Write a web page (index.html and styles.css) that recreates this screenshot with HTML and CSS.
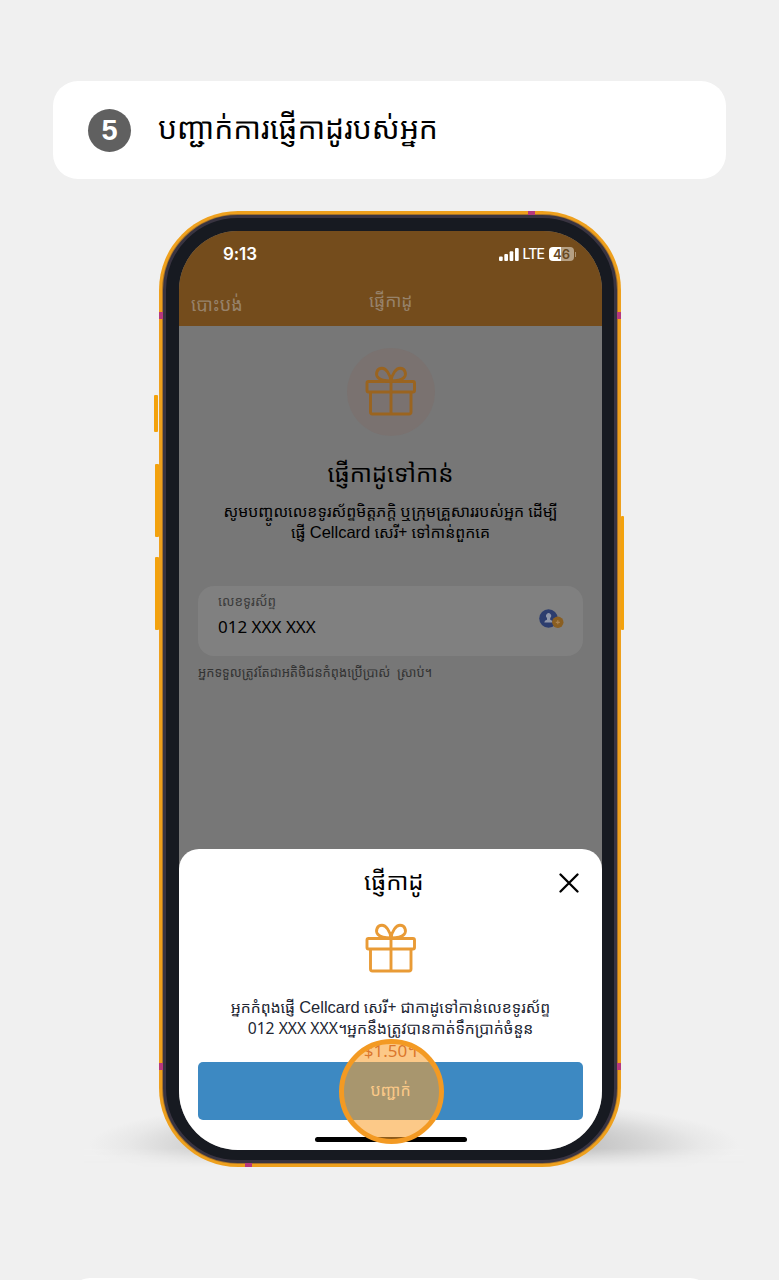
FILE: index.html
```html
<!DOCTYPE html>
<html lang="km">
<head>
<meta charset="utf-8">
<title>បញ្ជាក់ការផ្ញើកាដូរបស់អ្នក</title>
<link rel="stylesheet" href="styles.css">
</head>
<body>
<svg class="defs" aria-hidden="true">
  <symbol id="gift" viewBox="0 0 52 50">
    <g fill="none" stroke="currentColor" stroke-width="2.900" stroke-linejoin="round">
      <rect x="2" y="15.500" width="47.500" height="10.500" rx="1.500"/>
      <path d="M5.500 26V46Q5.500 48 7.500 48H44Q46 48 46 46V26M26 15.500V48"/>
      <path d="M26 15C25 8 21 2.300 17 2.300C12 2.300 10 8 13 11.500C15.500 14.500 20 15 26 15C27 8 31 2.300 35 2.300C40 2.300 42 8 39 11.500C36.500 14.500 32 15 26 15Z"/>
    </g>
  </symbol>
</svg>
<main class="page">
  <header class="step">
    <span class="step-number">5</span>
    <h1 class="step-title"><span>បញ្ជាក់ការផ្ញើកាដូរបស់អ្នក</span></h1>
  </header>

  <section class="device">
    <div class="ground"></div>
    <i class="key key-action"></i><i class="key key-up"></i><i class="key key-down"></i><i class="key key-power"></i>
    <div class="shell">
      <i class="band band-top"></i><i class="band band-bottom"></i>
      <i class="band side left upper"></i><i class="band side right upper"></i>
      <i class="band side left lower"></i><i class="band side right lower"></i>
      <div class="bezel">
        <div class="screen">
          <div class="topbar">
            <div class="status">
              <span class="time">9:13</span>
              <span class="indicators">
                <svg width="20" height="13" viewBox="0 0 20 13" fill="#fff"><rect y="8.500" width="3.700" height="4.500" rx="1"/><rect x="5.300" y="6" width="3.700" height="7" rx="1"/><rect x="10.600" y="3.300" width="3.700" height="9.700" rx="1"/><rect x="16" width="3.700" height="13" rx="1"/></svg>
                <span class="network">LTE</span>
                <span class="battery">46</span><i class="battery-tip"></i>
              </span>
            </div>
            <nav class="nav">
              <span class="cancel">បោះបង់</span>
              <span class="nav-title">ផ្ញើកាដូ</span>
            </nav>
          </div>
          <div class="content">
            <div class="gift-disc"><svg width="52" height="50"><use href="#gift"/></svg></div>
            <h2 class="heading">ផ្ញើកាដូទៅកាន់</h2>
            <p class="intro"><span class="intro-a">សូមបញ្ចូលលេខទូរស័ព្ទមិត្តភក្តិ ឬក្រុមគ្រួសាររបស់អ្នក ដើម្បី</span><br><span class="intro-b">ផ្ញើ <b>Cellcard</b> សេរី+ ទៅកាន់ពួកគេ</span></p>
            <div class="field">
              <div class="field-text">
                <span class="label">លេខទូរស័ព្ទ</span>
                <span class="value">012 XXX XXX</span>
              </div>
              <svg width="25" height="20" viewBox="0 0 25 20"><circle cx="9.500" cy="9.500" r="9.300" fill="#2c3d6e"/><path d="M5.300 13.500Q5.300 11.300 8 10.800V9A2.500 2.700 0 1 1 11.200 9V10.800Q13.800 11.300 13.800 13.500Z" fill="#8f96a8"/><circle cx="18.800" cy="13.300" r="5.700" fill="#8a5f22"/><path d="M16.800 13.300h4M18.800 11.300v4" stroke="#a98250" stroke-width="1.200"/></svg>
            </div>
            <p class="note">អ្នកទទួលត្រូវតែជាអតិថិជនកំពុងប្រើប្រាស់&nbsp; ស្រាប់។</p>
          </div>
          <div class="sheet">
            <div class="sheet-head">
              <h2 class="sheet-title">ផ្ញើកាដូ</h2>
              <svg class="close" width="20" height="20" viewBox="0 0 20 20"><path d="M1.500 1.500l17 17M18.500 1.500l-17 17" stroke="#000" stroke-width="2.300" stroke-linecap="round"/></svg>
            </div>
            <svg class="sheet-gift" width="52" height="50"><use href="#gift"/></svg>
            <p class="message"><span class="msg-a">អ្នកកំពុងផ្ញើ <b>Cellcard</b> សេរី+ ជាកាដូទៅកាន់លេខទូរស័ព្ទ</span><br><span class="msg-b">012 XXX XXX។អ្នកនឹងត្រូវបានកាត់ទឹកប្រាក់ចំនួន</span><br><span class="price">$1.50។</span></p>
            <div class="confirm"><span class="confirm-label">បញ្ជាក់</span><i class="tap"></i></div>
            <div class="home"></div>
          </div>
        </div>
      </div>
    </div>
  </section>
  <div class="next-card"></div>
</main>
</body>
</html>
```

FILE: styles.css
```css
* { box-sizing: border-box; }
body { margin: 0; background: #f0f0f0; color: #000; font-family: "Noto Sans", "Noto Sans Khmer", "DejaVu Sans", sans-serif; }
h1, h2, p { margin: 0; font-weight: 400; }
i { display: block; }
b { font-family: "Liberation Sans", sans-serif; font-weight: 400; }
.defs { display: none; }
.page { width: 779px; height: 1280px; padding: 81px 53px 0; overflow: hidden; display: flex; flex-direction: column; }
.step { flex: none; height: 98px; border-radius: 25px; background: #fff; display: flex; align-items: center; padding-left: 35px; }
.step-number { width: 43px; height: 43px; margin-right: 27px; border-radius: 50%; background: #606060; color: #fff; text-align: center; font: 700 29px/43px "Liberation Sans", sans-serif; }
.step-title { font-size: 30px; line-height: 40px; padding-bottom: 5px; white-space: nowrap; }

.device { position: relative; flex: none; width: 462px; height: 956px; margin: 32px 0 0 106px; }
.ground { position: absolute; left: -75px; bottom: 0; width: 660px; height: 76px; background: radial-gradient(ellipse 325px 48px at 50% 54px, #b5b5b5 0%, #c0c0c0 50%, #d6d6d6 72%, #e8e8e8 88%, #f0f0f0 100%); -webkit-mask-image: linear-gradient(#000 76%, transparent 100%); mask-image: linear-gradient(#000 76%, transparent 100%); }
.key { position: absolute; width: 4px; left: -4px; background: #f3a20d; border-radius: 1px; }
.key-action { top: 184px; height: 37px; left: -5px; }
.key-up { top: 253px; height: 73px; }
.key-down { top: 346px; height: 73px; }
.key-power { top: 305px; height: 114px; left: 462px; width: 3px; }
.shell { position: relative; height: 100%; padding: 4px; border-radius: 79px; background: #eea01d; }
.bezel { height: 100%; padding: 13px 12px 13px 13px; border: 3px solid #393441; border-radius: 75px; background: #171a21; box-shadow: 0 0 0 1px #a87329; }
.band { position: absolute; background: #b6387e; }
.band-top { top: 0; left: 369px; width: 7px; height: 4px; }
.band-bottom { bottom: 0; left: 86px; width: 7px; height: 4px; }
.side { width: 4px; height: 7px; }
.left { left: 0; } .right { right: 0; }
.upper { top: 101px; } .lower { bottom: 97px; }

.screen { width: 423px; height: 919px; overflow: hidden; border-radius: 59px; background: #777; display: flex; flex-direction: column; white-space: nowrap; }
.topbar { height: 95px; background: #744c1c; flex: none; padding-top: 11px; }
.status { height: 24px; padding: 0 26px 0 44px; display: flex; justify-content: space-between; align-items: center; color: #fff; }
.time { font: 600 17px/24px Inter, sans-serif; letter-spacing: -.1px; }
.indicators { display: flex; align-items: center; }
.network { font: 500 14px/20px Inter, sans-serif; margin: 0 5px 0 4px; letter-spacing: -.9px; }
.battery { width: 25px; height: 14px; border-radius: 4px; background: linear-gradient(90deg, #fff 48%, #b6a083 48%); color: #68491f; font: 600 13px/14px Inter, sans-serif; text-align: center; }
.battery-tip { width: 1px; height: 5px; background: #ad9270; margin-left: 1px; }
.nav { display: grid; grid-template-columns: 178px 1fr; padding: 20px 0 0 12px; color: #97826a; }
.cancel { font-size: 18px; line-height: 28px; padding-top: 4px; }
.nav-title { font-size: 17.500px; line-height: 28px; }
.content { flex: none; height: 523px; text-align: center; padding: 22px 19px 0; display: flex; flex-direction: column; align-items: center; }
.gift-disc { flex: none; width: 88px; height: 88px; border-radius: 50%; background: #7a7270; color: #9a6420; display: grid; place-items: center; padding-bottom: 2px; }
.gift-disc svg, .sheet-gift { display: block; }
.heading { font-size: 24px; line-height: 36px; margin-top: 19px; }
.intro { font-size: 15.850px; line-height: 21px; margin-top: 10px; }
.intro b, .message b { font-size: 16.500px; line-height: 1; }
.field { flex: none; width: 385px; height: 70px; margin-top: 43px; padding: 4px 19px 0 20px; border-radius: 16px; background: #808080; display: flex; justify-content: space-between; text-align: left; }
.field svg { margin-top: 19px; }
.field-text { display: flex; flex-direction: column; }
.label { font-size: 13.500px; line-height: 22px; color: #3c3c3c; }
.value { font-size: 17px; line-height: 28px; padding-top: 1px; }
.note { align-self: flex-start; font-size: 12.900px; line-height: 20px; margin-top: 6px; color: #333; }
.sheet { height: 301px; flex: none; background: #fff; border-radius: 20px 20px 0 0; display: flex; flex-direction: column; align-items: center; }
.sheet-head { width: 100%; height: 68px; padding: 0 23px 0 185px; display: flex; justify-content: space-between; align-items: center; }
.sheet-title { font-size: 24px; line-height: 36px; padding-bottom: 5px; }
.sheet-gift { flex: none; margin-top: 6px; color: #e99b36; }
.message { height: 66px; margin-top: 24px; text-align: center; font-size: 15.700px; line-height: 21px; color: #222633; }
.price { font-size: 17px; line-height: 24px; color: #b3402a; }
.confirm { position: relative; flex: none; width: 385px; height: 58px; margin-top: -1px; border-radius: 5px; background: #3d89c2; color: #fff; display: grid; place-items: center; padding-bottom: 3px; }
.confirm-label { font-size: 16px; line-height: 24px; }
.tap { position: absolute; left: 141px; top: -23px; width: 105px; height: 105px; border: 5px solid #f39a23; border-radius: 50%; background: rgba(250, 160, 45, .57); }
.home { width: 152px; height: 5px; margin-top: 17px; border-radius: 3px; background: #000; }
.next-card { flex: none; width: 640px; height: 20px; margin: 111px auto 0; border-radius: 20px 20px 0 0; background: #fff; }
```
